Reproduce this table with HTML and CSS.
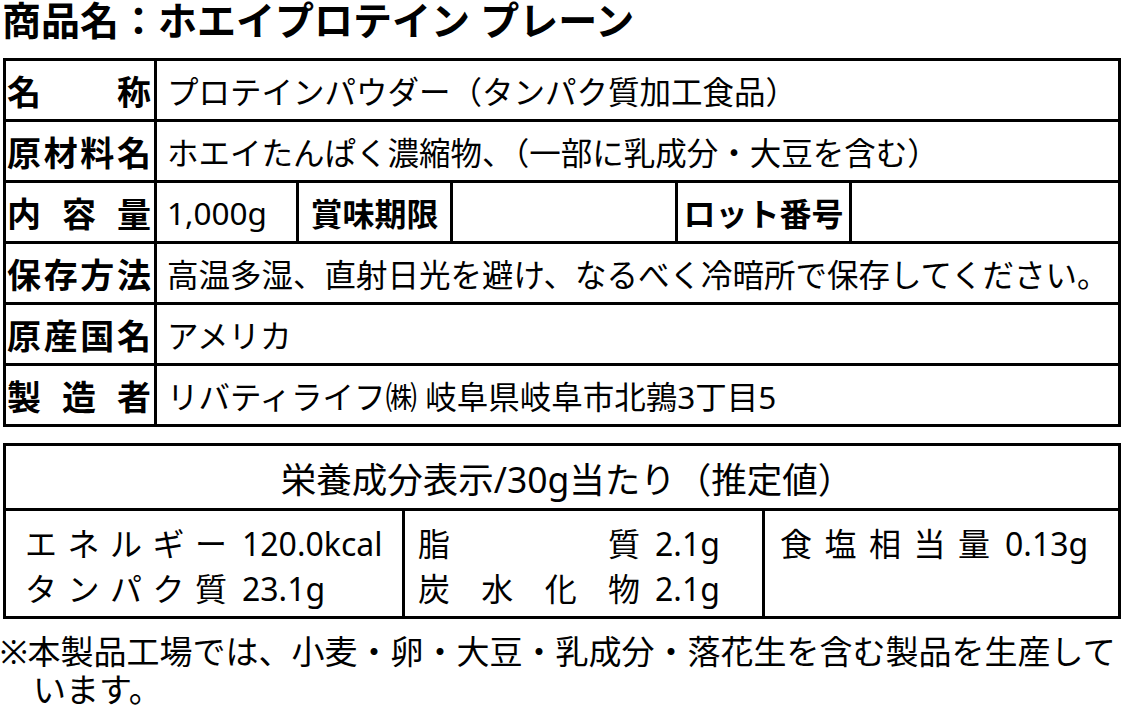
FILE: index.html
```html
<!DOCTYPE html>
<html lang="ja">
<head>
<meta charset="utf-8">
<title>商品名：ホエイプロテイン プレーン</title>
<link rel="stylesheet" href="styles.css">
</head>
<body>
<div class="page">
  <h1 class="title">商品名：ホエイプロテイン プレーン</h1>

  <div class="spec">
    <div class="lbl"><span>名</span><span>称</span></div>
    <div class="val wide">プロテインパウダー（タンパク質加工食品）</div>

    <div class="lbl"><span>原</span><span>材</span><span>料</span><span>名</span></div>
    <div class="val wide">ホエイたんぱく濃縮物、（一部に乳成分・大豆を含む）</div>

    <div class="lbl"><span>内</span><span>容</span><span>量</span></div>
    <div class="val">1,000g</div>
    <div class="sub">賞味期限</div>
    <div class="val"></div>
    <div class="sub">ロット番号</div>
    <div class="val"></div>

    <div class="lbl"><span>保</span><span>存</span><span>方</span><span>法</span></div>
    <div class="val wide">高温多湿、直射日光を避け、なるべく冷暗所で保存してください。</div>

    <div class="lbl"><span>原</span><span>産</span><span>国</span><span>名</span></div>
    <div class="val wide">アメリカ</div>

    <div class="lbl"><span>製</span><span>造</span><span>者</span></div>
    <div class="val wide">リバティライフ㈱ 岐阜県岐阜市北鶉3丁目5</div>
  </div>

  <div class="nutri">
    <div class="nhead">栄養成分表示/30g当たり（推定値）</div>
    <div class="ncell c1">
      <div class="nline"><span class="nl nl1"><span>エ</span><span>ネ</span><span>ル</span><span>ギ</span><span>ー</span></span><span class="nv">120.0kcal</span></div>
      <div class="nline"><span class="nl nl1"><span>タ</span><span>ン</span><span>パ</span><span>ク</span><span>質</span></span><span class="nv">23.1g</span></div>
    </div>
    <div class="ncell c2">
      <div class="nline"><span class="nl nl2"><span>脂</span><span>質</span></span><span class="nv">2.1g</span></div>
      <div class="nline"><span class="nl nl2"><span>炭</span><span>水</span><span>化</span><span>物</span></span><span class="nv">2.1g</span></div>
    </div>
    <div class="ncell c3">
      <div class="nline"><span class="nl nl3"><span>食</span><span>塩</span><span>相</span><span>当</span><span>量</span></span><span class="nv">0.13g</span></div>
    </div>
  </div>

  <p class="note">※本製品工場では、小麦・卵・大豆・乳成分・落花生を含む製品を生産して<br>います。</p>
</div>
</body>
</html>
```

FILE: styles.css
```css
html, body {
  margin: 0;
  padding: 0;
  background: #fff;
}

body {
  font-family: "Noto Sans", "Noto Sans CJK JP", sans-serif;
  color: #000;
}

.page {
  width: 1122px;
}

.title {
  margin: 0 0 0 2px;
  height: 58px;
  font-size: 39px;
  line-height: 39px;
  font-weight: 700;
  white-space: nowrap;
}

.spec {
  margin-left: 3px;
  width: 1118px;
  box-sizing: border-box;
  display: grid;
  grid-template-columns: 148px 139px 151px 222px 171px 266px;
  grid-auto-rows: 58px;
  gap: 3px;
  padding: 3px;
  background: #000;
}

.spec > div {
  background: #fff;
  display: flex;
  align-items: center;
  font-size: 31.5px;
}

.spec > .lbl {
  justify-content: space-between;
  padding: 0 3px 0 1px;
  font-weight: 700;
  font-size: 34px;
}

.val {
  padding-left: 10px;
  white-space: nowrap;
}

.val.wide {
  grid-column: span 5;
}

.spec > .sub {
  justify-content: center;
  font-weight: 700;
  font-size: 32px;
}

.nutri {
  margin: 16px 0 0 3px;
  width: 1118px;
  box-sizing: border-box;
  display: grid;
  grid-template-columns: 396px 357px 353px;
  grid-template-rows: 62px 105px;
  gap: 3px;
  padding: 3px;
  background: #000;
}

.nutri > div {
  background: #fff;
}

.nhead {
  grid-column: 1 / -1;
  display: flex;
  align-items: center;
  justify-content: center;
  padding-left: 10px;
  font-size: 35.5px;
  white-space: nowrap;
}

.ncell {
  padding-top: 10px;
  font-size: 32px;
  line-height: 45px;
}

.c1 { padding-left: 19px; }
.c2 { padding-left: 13px; }
.c3 { padding-left: 15px; }

.nline {
  display: flex;
  align-items: baseline;
  white-space: nowrap;
}

.nl {
  display: flex;
  justify-content: space-between;
}

.nl1 { width: 202px; }
.nl2 { width: 222px; }
.nl3 { width: 210px; }

.nv {
  margin-left: 15px;
}

.note {
  margin: 14px 0 0 0;
  padding-left: 33px;
  text-indent: -33px;
  font-size: 33px;
  line-height: 38px;
  white-space: nowrap;
}
```
